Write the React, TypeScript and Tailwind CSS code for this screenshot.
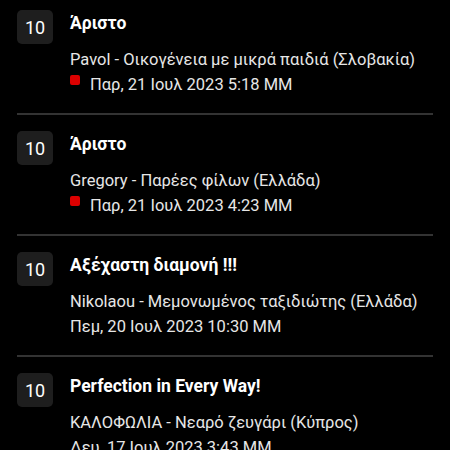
import React from 'react';

type Review = {
  score: number;
  title: string;
  author: string;
  group: string;
  date: string;
  flagged: boolean;
};

const reviews: Review[] = [
  {
    score: 10,
    title: 'Άριστο',
    author: 'Pavol',
    group: 'Οικογένεια με μικρά παιδιά (Σλοβακία)',
    date: 'Παρ, 21 Ιουλ 2023 5:18 ΜΜ',
    flagged: true,
  },
  {
    score: 10,
    title: 'Άριστο',
    author: 'Gregory',
    group: 'Παρέες φίλων (Ελλάδα)',
    date: 'Παρ, 21 Ιουλ 2023 4:23 ΜΜ',
    flagged: true,
  },
  {
    score: 10,
    title: 'Αξέχαστη διαμονή !!!',
    author: 'Nikolaou',
    group: 'Μεμονωμένος ταξιδιώτης (Ελλάδα)',
    date: 'Πεμ, 20 Ιουλ 2023 10:30 ΜΜ',
    flagged: false,
  },
  {
    score: 10,
    title: 'Perfection in Every Way!',
    author: 'ΚΑΛΟΦΩΛΙΑ',
    group: 'Νεαρό ζευγάρι (Κύπρος)',
    date: 'Δευ, 17 Ιουλ 2023 3:43 ΜΜ',
    flagged: false,
  },
];

function ReviewRow({ review, first }: { review: Review; first: boolean }) {
  return (
    <div className={first ? 'pt-[10px]' : 'pt-4'}>
      <div className="flex pb-4">
        {/* Score badge */}
        <div className="w-9 h-[34px] shrink-0 rounded-[5px] bg-[#1e1e1e] flex items-center justify-center text-[18px] text-white">
          {review.score}
        </div>

        <div className="ml-[17px] flex flex-col min-w-0">
          <div className="mt-px text-[17.5px] leading-6 font-bold text-white">{review.title}</div>
          <div className="mt-3 text-[16.5px] leading-[25px] text-[#e6e6e6] whitespace-nowrap">
            {review.author} - {review.group}
          </div>
          <div className="flex items-start text-[16.5px] leading-[25px] text-[#e6e6e6] whitespace-nowrap">
            {review.flagged && (
              <span className="w-[10px] h-[10px] mt-[3px] mr-[10px] rounded-[2px] bg-[#dc0000] shrink-0" />
            )}
            <span>{review.date}</span>
          </div>
        </div>
      </div>
      <div className="h-[2px] bg-[#333333]" />
    </div>
  );
}

export default function App() {
  return (
    <div
      className="min-h-screen h-[450px] overflow-hidden bg-black px-[17px]"
      style={{ fontFamily: 'Roboto, "Noto Sans", sans-serif' }}
    >
      {reviews.map((r, i) => (
        <ReviewRow key={i} review={r} first={i === 0} />
      ))}
    </div>
  );
}
